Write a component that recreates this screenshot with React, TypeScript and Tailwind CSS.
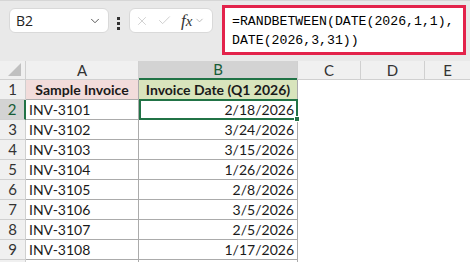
import { ChevronDown, X, Check } from "lucide-react";

const rows = [
  ["INV-3101", "2/18/2026"],
  ["INV-3102", "3/24/2026"],
  ["INV-3103", "3/15/2026"],
  ["INV-3104", "1/26/2026"],
  ["INV-3105", "2/8/2026"],
  ["INV-3106", "3/5/2026"],
  ["INV-3107", "2/5/2026"],
  ["INV-3108", "1/17/2026"],
];

const cellFont = { fontFamily: "Lato, 'Noto Sans', sans-serif" };

export default function App() {
  return (
    <div className="w-[470px] h-[262px] overflow-hidden bg-white text-[#1a1a1a]" style={cellFont}>
      {/* Formula bar */}
      <div className="relative h-[61px] bg-[#e9e9e9] border-t border-[#d6d6d6] flex items-start">
        <div className="mt-[7px] ml-[9px] w-[100px] h-[25px] rounded-md bg-white border border-[#d9d9d9] flex items-center justify-between pl-[6px] pr-[6px]">
          <span className="text-[14px] text-[#222]" style={{ fontFamily: "'Open Sans', sans-serif" }}>B2</span>
          <ChevronDown className="w-[14px] h-[14px] text-[#444]" strokeWidth={1.5} />
        </div>
        <div className="mt-[16px] ml-[8px] flex flex-col gap-[2px]">
          <span className="w-[3px] h-[3px] bg-[#333]" />
          <span className="w-[3px] h-[3px] bg-[#333]" />
          <span className="w-[3px] h-[3px] bg-[#333]" />
        </div>
        <div className="mt-[7px] ml-[9px] w-[84px] h-[25px] rounded-md bg-white border border-[#d9d9d9] flex items-center pl-[5px]">
          <X className="w-[14px] h-[14px] text-[#c4c4c4]" strokeWidth={1.3} />
          <Check className="w-[15px] h-[15px] ml-[8px] text-[#c4c4c4]" strokeWidth={1.3} />
          <span className="ml-[9px] text-[17px] italic text-[#333] leading-none" style={{ fontFamily: "'Liberation Serif', serif" }}>
            f<span className="text-[15px]">x</span>
          </span>
          <ChevronDown className="w-[11px] h-[11px] ml-[2px] text-[#9a9a9a]" strokeWidth={1.5} />
        </div>
        <div
          className="absolute left-[222px] top-[4px] w-[244px] h-[50px] bg-white border-[3px] border-[#e3234b] pl-[7px] pt-[4px] text-[13.2px] leading-[19px] text-black"
          style={{ fontFamily: "'Liberation Mono', monospace" }}
        >
          <div>=RANDBETWEEN(DATE(2026,1,1),</div>
          <div>DATE(2026,3,31))</div>
        </div>
      </div>

      {/* Column headers */}
      <div className="flex h-[19px] bg-[#f0f0f0] text-[15px] text-[#333]">
        <div className="relative w-[26px] border-r border-b border-[#d0d0d0]">
          <div className="absolute right-[4px] bottom-[3px] w-0 h-0 border-l-[13px] border-l-transparent border-b-[13px] border-b-[#c0c0c0]" />
        </div>
        <div className="w-[113px] flex items-center justify-center border-r border-b border-[#d0d0d0]">A</div>
        <div className="w-[158px] flex items-center justify-center bg-[#d3d3d3] border-b-2 border-[#217346] text-[#185c37]">B</div>
        <div className="w-[64px] flex items-center justify-center border-l border-r border-b border-[#d0d0d0]">C</div>
        <div className="w-[64px] flex items-center justify-center border-r border-b border-[#d0d0d0]">D</div>
        <div className="flex-1 flex items-center justify-center border-b border-[#d0d0d0]">E</div>
      </div>

      {/* Header row */}
      <div className="flex h-[20px] text-[14px]">
        <div className="w-[26px] bg-[#f0f0f0] flex items-center justify-center text-[15px] text-[#333] border-r border-b border-[#d0d0d0]">1</div>
        <div className="w-[113px] bg-[#f2dcdb] flex items-center justify-center font-bold border-r border-b border-[#ababab]">Sample Invoice</div>
        <div className="w-[159px] bg-[#d8e4bc] flex items-center justify-center font-bold border-r border-b border-[#ababab]">Invoice Date (Q1 2026)</div>
        <div className="flex-1" />
      </div>

      {rows.map(([inv, date], i) => {
        const sel = i === 0;
        return (
          <div key={inv} className="flex h-[20px] text-[14px]">
            <div
              className={
                sel
                  ? "w-[26px] bg-[#d3d3d3] flex items-center justify-center text-[15px] text-[#185c37] border-r-2 border-r-[#217346] border-b border-b-[#d0d0d0]"
                  : "w-[26px] bg-[#f0f0f0] flex items-center justify-center text-[15px] text-[#333] border-r border-b border-[#d0d0d0]"
              }
            >
              {i + 2}
            </div>
            <div className="w-[113px] flex items-center pl-[3px] border-r border-b border-[#ababab]">{inv}</div>
            <div
              className={
                sel
                  ? "relative w-[159px] flex items-center justify-end pr-[2px] border-2 border-[#217346] -mt-[1px] h-[21px]"
                  : "w-[159px] flex items-center justify-end pr-[3px] border-r border-b border-[#ababab]"
              }
            >
              {date}
              {sel && <div className="absolute -right-[4px] -bottom-[4px] w-[6px] h-[6px] bg-[#217346] border border-white" />}
            </div>
            <div className="flex-1" />
          </div>
        );
      })}
      <div className="flex h-[2px]">
        <div className="w-[26px] bg-[#f0f0f0] border-r border-[#d0d0d0]" />
        <div className="w-[113px] border-r border-[#ababab]" />
        <div className="w-[159px] border-r border-[#ababab]" />
      </div>
    </div>
  );
}
